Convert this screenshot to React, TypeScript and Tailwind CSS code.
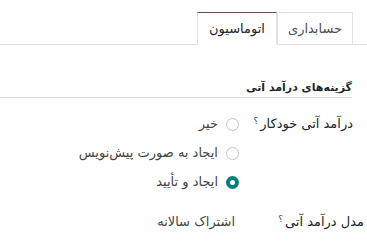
import React from "react";

const options = [
  { key: "no", label: "خیر", checked: false },
  { key: "draft", label: "ایجاد به صورت پیش‌نویس", checked: false },
  { key: "post", label: "ایجاد و تأیید", checked: true },
];

function Radio({ checked }: { checked: boolean }) {
  return checked ? (
    <span className="flex h-[13px] w-[13px] shrink-0 items-center justify-center rounded-full bg-[#017e84]">
      <span className="h-[5px] w-[5px] rounded-full bg-white" />
    </span>
  ) : (
    <span className="h-[13px] w-[13px] shrink-0 rounded-full border border-[#c4c4c4] bg-white" />
  );
}

export default function App() {
  return (
    <div
      dir="rtl"
      className="h-[252px] w-[367px] overflow-hidden bg-white text-[13px] text-[#212529]"
      style={{ fontFamily: '"DejaVu Sans", "Noto Sans", sans-serif' }}
    >
      {/* Tabs */}
      <div className="mt-[12px] flex border-b border-[#dee2e6] pr-[14px]">
        <div className="-mb-px flex h-[33px] w-[76px] items-center justify-center border border-[#dee2e6] text-[#495057]">
          حسابداری
        </div>
        <div className="-mb-px flex h-[33px] w-[80px] items-center justify-center border border-t-[#714b67] border-x-[#dee2e6] border-b-white bg-white text-[#212529]">
          اتوماسیون
        </div>
      </div>

      {/* Section heading */}
      <div className="mr-[15px] mt-[35px] border-b border-[#dee2e6] pb-[1px] text-[11px] font-bold leading-[16px]">
        گزینه‌های درآمد آتی
      </div>

      {/* Auto post */}
      <div className="mt-[16px] flex pr-[14px]">
        <div className="w-[114px] shrink-0 leading-[20px]">
          درآمد آتی خودکار
          <sup className="mr-[2px] text-[9px] text-[#495057]">؟</sup>
        </div>
        <div className="flex flex-col gap-[9px]">
          {options.map((o) => (
            <label key={o.key} className="flex h-[20px] items-center gap-[8px] text-[#444]">
              <Radio checked={o.checked} />
              <span>{o.label}</span>
            </label>
          ))}
        </div>
      </div>

      {/* Model */}
      <div className="mt-[20px] flex pr-[3px] leading-[20px]">
        <div className="w-[129px] shrink-0">
          مدل درآمد آتی
          <sup className="mr-[2px] text-[9px] text-[#495057]">؟</sup>
        </div>
        <div className="text-[#444]">اشتراک سالانه</div>
      </div>
    </div>
  );
}
